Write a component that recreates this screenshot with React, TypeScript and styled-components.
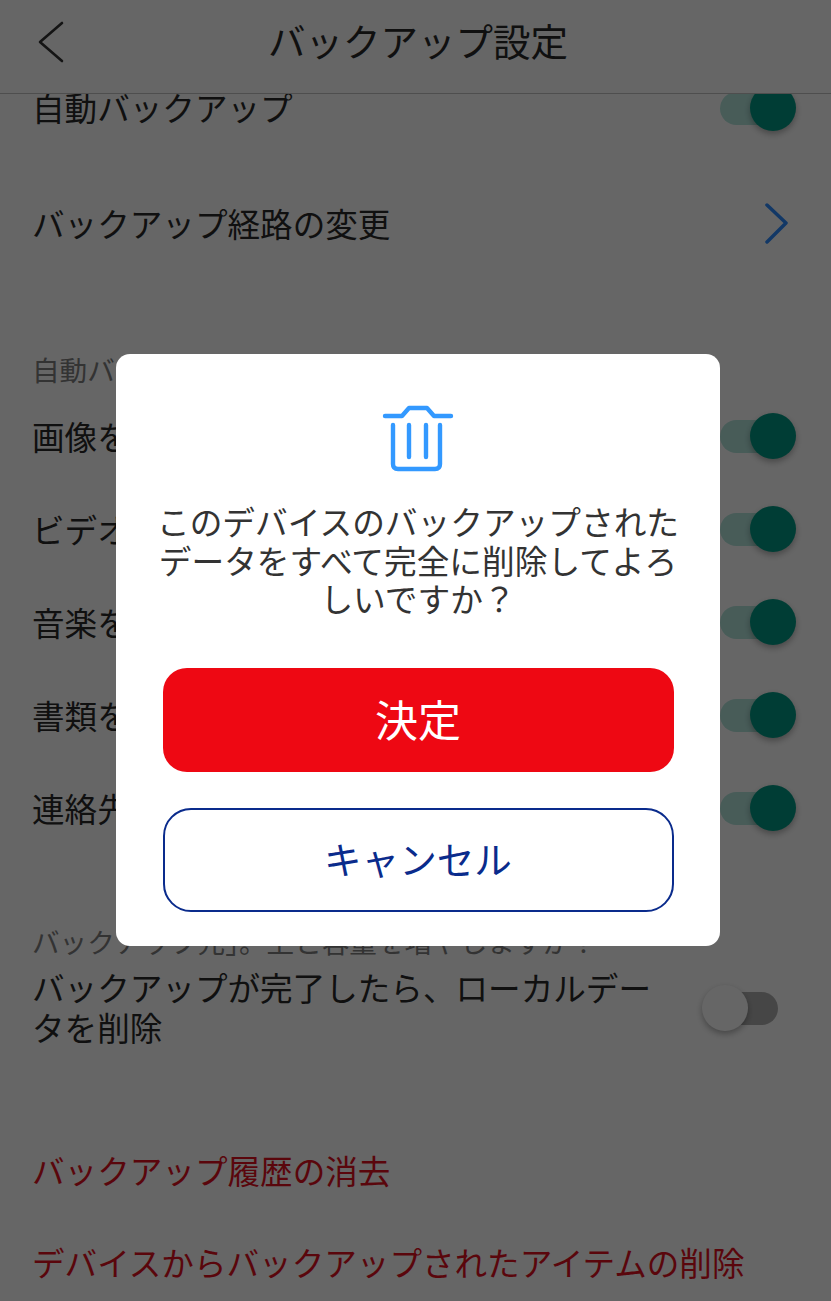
import React from "react";
import styled, { createGlobalStyle } from "styled-components";

const Global = createGlobalStyle`
  html, body { margin: 0; padding: 0; background: #fff; }
  body { font-family: "Noto Sans CJK JP", "Noto Sans", sans-serif; }
`;

const Page = styled.div`
  position: relative;
  width: 831px;
  height: 1301px;
  overflow: hidden;
  background: #fff;
  color: #2a2a2a;
`;

const Header = styled.header`
  position: relative;
  z-index: 1;
  height: 93px;
  box-sizing: content-box;
  display: flex;
  align-items: center;
  justify-content: center;
  background: #fff;
  border-bottom: 1px solid #c4c4c4;
`;

const Title = styled.h1`
  margin: 0 0 14px 5px;
  font-size: 37.5px;
  font-weight: 400;
  line-height: 1;
`;

const BackButton = styled.svg`
  position: absolute;
  left: 36px;
  top: 20px;
  width: 30px;
  height: 44px;
`;

const Content = styled.main`
  margin-top: -18px;
  padding: 0 35px 0 32px;
  display: flex;
  flex-direction: column;
`;

const Row = styled.div<{ $height: number }>`
  height: ${(p) => p.$height}px;
  display: flex;
  align-items: center;
  justify-content: space-between;
`;

const Label = styled.span<{ $danger?: boolean }>`
  font-size: 32.6px;
  line-height: 40px;
  font-weight: 400;
  color: ${(p) => (p.$danger ? "#e2101e" : "#2a2a2a")};
`;

const WrapLabel = styled(Label)`
  width: 630px;
`;

const Caption = styled.div<{ $top: number; $bottom: number }>`
  margin: ${(p) => p.$top}px 0 ${(p) => p.$bottom}px;
  font-size: 27.6px;
  line-height: 36px;
  color: #808080;
  white-space: nowrap;
`;

const DangerList = styled.div`
  margin-top: 73px;
  display: flex;
  flex-direction: column;
`;

const Track = styled.span<{ $on: boolean }>`
  position: relative;
  flex: none;
  width: 58px;
  height: 33px;
  margin: 2px 18px 0 0;
  border-radius: 17px;
  background: ${(p) => (p.$on ? "#b4e6dd" : "#b0b0b0")};
`;

const Thumb = styled.span<{ $on: boolean }>`
  position: absolute;
  top: -7px;
  ${(p) => (p.$on ? "right: -18px;" : "left: -18px;")}
  width: 46px;
  height: 46px;
  border-radius: 50%;
  background: ${(p) => (p.$on ? "#009a84" : "#fff")};
  box-shadow: 0 3px 6px rgba(0, 0, 0, 0.3);
`;

const Chevron = styled.svg`
  flex: none;
  width: 24px;
  height: 42px;
  margin-right: 8px;
`;

const Overlay = styled.div`
  position: absolute;
  inset: 0;
  z-index: 2;
  background: rgba(0, 0, 0, 0.6);
`;

const Modal = styled.section`
  position: absolute;
  z-index: 3;
  left: 116px;
  top: 354px;
  width: 604px;
  height: 592px;
  box-sizing: border-box;
  padding: 50px 30px 0;
  background: #fff;
  border-radius: 14px;
  display: flex;
  flex-direction: column;
  align-items: center;
`;

const TrashIcon = styled.svg`
  width: 74px;
  height: 70px;
  flex: none;
  margin-bottom: 28px;
`;

const Message = styled.p`
  margin: 0 0 50px;
  width: 540px;
  font-size: 32.7px;
  line-height: 38.5px;
  text-align: center;
  color: #333;
`;

const ConfirmButton = styled.button`
  width: 511px;
  height: 104px;
  flex: none;
  padding: 0 0 4px;
  border: 0;
  border-radius: 24px;
  background: #ee0813;
  color: #fff;
  font: 400 43px "Noto Sans CJK JP", sans-serif;
  margin-bottom: 36px;
`;

const CancelButton = styled.button`
  width: 511px;
  height: 104px;
  flex: none;
  box-sizing: border-box;
  padding: 0 0 5px;
  border: 2px solid #0a2b8c;
  border-radius: 28px;
  background: #fff;
  color: #0a2b8c;
  font: 400 37.6px "Noto Sans CJK JP", sans-serif;
`;

const Toggle = ({ on }: { on: boolean }) => (
  <Track $on={on}>
    <Thumb $on={on} />
  </Track>
);

const backupRows = [
  "画像をバックアップ",
  "ビデオをバックアップ",
  "音楽をバックアップ",
  "書類をバックアップ",
  "連絡先をバックアップ",
];

export default function App() {
  return (
    <Page>
      <Global />
      <Header>
        <BackButton viewBox="0 0 30 44" fill="none" stroke="#333" strokeWidth="2.6" strokeLinecap="round" strokeLinejoin="round">
          <path d="M26 3 L4 22 L26 41" />
        </BackButton>
        <Title>バックアップ設定</Title>
      </Header>
      <Content>
        <Row $height={62}>
          <Label>自動バックアップ</Label>
          <Toggle on />
        </Row>
        <Row $height={170}>
          <Label>バックアップ経路の変更</Label>
          <Chevron viewBox="0 0 24 42" fill="none" stroke="#2f8cff" strokeWidth="3.5" strokeLinecap="round" strokeLinejoin="round">
            <path d="M3 3 L22 21 L3 40" />
          </Chevron>
        </Row>
        <Caption $top={43} $bottom={2}>自動バックアップする項目</Caption>
        {backupRows.map((label) => (
          <Row key={label} $height={93}>
            <Label>{label}</Label>
            <Toggle on />
          </Row>
        ))}
        <Caption $top={69} $bottom={4}>バックアップ元」。上と容量を増やしますか？</Caption>
        <Row $height={88}>
          <WrapLabel>バックアップが完了したら、ローカルデータを削除</WrapLabel>
          <Toggle on={false} />
        </Row>
        <DangerList>
          <Row $height={92}>
            <Label $danger>バックアップ履歴の消去</Label>
          </Row>
          <Row $height={92}>
            <Label $danger>デバイスからバックアップされたアイテムの削除</Label>
          </Row>
        </DangerList>
      </Content>
      <Overlay />
      <Modal>
        <TrashIcon viewBox="0 0 74 70" fill="none" stroke="#3399ff" strokeWidth="4.4" strokeLinecap="round" strokeLinejoin="round">
          <path d="M4 12 H21 L28 4 H46 L53 12 H70" />
          <path d="M12 21 V60 Q12 65 17 65 H54 Q59 65 59 60 V21" />
          <path d="M28 21 V53 M45 21 V53" />
        </TrashIcon>
        <Message>このデバイスのバックアップされたデータをすべて完全に削除してよろしいですか？</Message>
        <ConfirmButton>決定</ConfirmButton>
        <CancelButton>キャンセル</CancelButton>
      </Modal>
    </Page>
  );
}
